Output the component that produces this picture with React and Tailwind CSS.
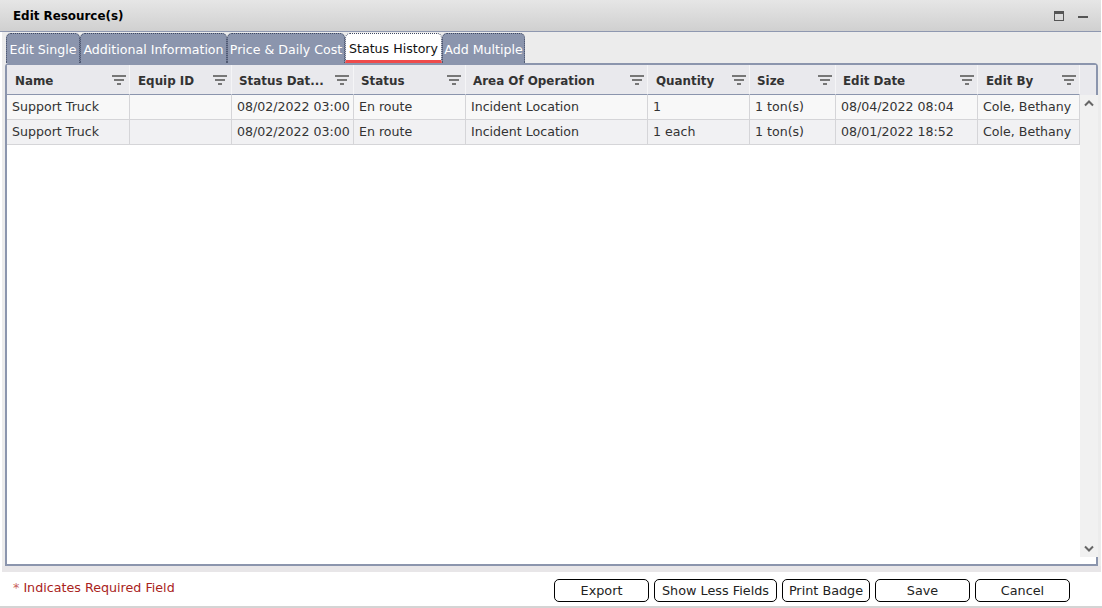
import React from "react";

const font = { fontFamily: '"DejaVu Sans", Verdana, sans-serif' };

const columns = [
  { label: "Name", width: "w-[123px]", pad: "pl-[8px] pr-[3px]" },
  { label: "Equip ID", width: "w-[102px]", pad: "pl-[8px] pr-[4px]" },
  { label: "Status Dat...", width: "w-[122px]", pad: "pl-[7px] pr-[4px]" },
  { label: "Status", width: "w-[112px]", pad: "pl-[7px] pr-[4px]" },
  { label: "Area Of Operation", width: "w-[182px]", pad: "pl-[7px] pr-[3px]" },
  { label: "Quantity", width: "w-[102px]", pad: "pl-[8px] pr-[3px]" },
  { label: "Size", width: "w-[86px]", pad: "pl-[7px] pr-[3px]" },
  { label: "Edit Date", width: "w-[142px]", pad: "pl-[7px] pr-[3px]" },
  { label: "Edit By", width: "w-[102px]", pad: "pl-[8px] pr-[3px]" },
];

const rows = [
  ["Support Truck", "", "08/02/2022 03:00", "En route", "Incident Location", "1", "1 ton(s)", "08/04/2022 08:04", "Cole, Bethany"],
  ["Support Truck", "", "08/02/2022 03:00", "En route", "Incident Location", "1 each", "1 ton(s)", "08/01/2022 18:52", "Cole, Bethany"],
];

const tabs = [
  { label: "Edit Single", width: "w-[74px]" },
  { label: "Additional Information", width: "w-[147px]" },
  { label: "Price & Daily Cost", width: "w-[118px]" },
  { label: "Status History", width: "w-[97px]", active: true },
  { label: "Add Multiple", width: "w-[83px]" },
];

function FilterIcon() {
  return (
    <svg width="14" height="11" viewBox="0 0 14 11" className="shrink-0">
      <rect x="0" y="0" width="14" height="2" fill="#777" />
      <rect x="2" y="4" width="10" height="2" fill="#777" />
      <rect x="5" y="8" width="4" height="2" fill="#777" />
    </svg>
  );
}

function Btn({ children, width }) {
  return (
    <button className={`h-[23px] ${width} rounded-[5px] border border-black bg-white pt-[2px] text-[12.8px] leading-none text-[#222]`}>
      {children}
    </button>
  );
}

export default function App() {
  return (
    <div style={font} className="flex h-[608px] w-[1102px] flex-col overflow-hidden bg-white">
      <div className="mr-px flex h-[32px] shrink-0 items-center justify-between border-b border-[#8f98b0] bg-gradient-to-b from-[#e6e6e6] to-[#d0d0d0] pl-[13px] pr-[13px]">
        <span className="pt-[2px] text-[11.9px] font-bold text-black">Edit Resource(s)</span>
        <div className="flex items-center gap-[14px]">
          <div className="h-[10px] w-[10px] border border-[#555] border-t-[3px]" />
          <div className="mt-[3px] h-[2px] w-[10px] bg-[#555]" />
        </div>
      </div>

      <div className="ml-[2px] mr-px flex h-[540px] shrink-0 flex-col border-b-[6px] border-[#e8e6e8] bg-[#ececec] pl-[3px] pr-[3px]">
        <div className="flex h-[31px] shrink-0 items-end pl-px pt-px">
          {tabs.map((t) => (
            <div
              key={t.label}
              className={
                t.active
                  ? `flex h-[30px] ${t.width} items-center justify-center whitespace-nowrap rounded-t-[5px] border border-b-[3px] border-dotted border-[#3c4660] border-b-[#ef4b4b] bg-white pt-[5px] text-[12.6px] text-[#111] [border-bottom-style:solid]`
                  : `flex h-[30px] ${t.width} items-center justify-center whitespace-nowrap rounded-t-[5px] border border-b-0 border-dotted border-[#3c4660] bg-[#8b95ad] pt-[3px] text-[12.6px] text-white`
              }
            >
              {t.label}
            </div>
          ))}
        </div>

        <div className="flex min-h-0 flex-1 flex-col rounded-t-[4px] border-2 border-[#8b95ad] bg-white">
          <div className="flex h-[30px] shrink-0 bg-[#e9e9ed]">
            {columns.map((c) => (
              <div
                key={c.label}
                className={`flex ${c.width} shrink-0 items-center justify-between border-b border-r border-[#f5f5f7] border-b-[#8b95ad] pt-[2px] ${c.pad} text-[11.9px] font-bold text-[#333]`}
              >
                <span className="whitespace-nowrap pt-[3px]">{c.label}</span>
                <FilterIcon />
              </div>
            ))}
            <div className="flex-1" />
          </div>

          <div className="flex min-h-0 flex-1">
            <div className="w-[1073px] shrink-0">
              {rows.map((r, i) => (
                <div key={i} className={`flex h-[25px] border-b border-[#d5d5d8] ${i === 0 ? "bg-[#f8f8f8]" : "bg-[#f1f1f3]"}`}>
                  {r.map((v, j) => (
                    <div
                      key={j}
                      className={`flex ${columns[j].width} shrink-0 items-center overflow-hidden whitespace-nowrap border-r border-[#d5d5d8] pl-[5px] text-[12.6px] text-[#333]`}
                    >
                      {v}
                    </div>
                  ))}
                </div>
              ))}
            </div>
            <div className="mb-[7px] flex w-[18px] shrink-0 flex-col items-center justify-between bg-[#f1f1f1] pb-[5px] pt-[5px]">
              <svg width="10" height="7" viewBox="0 0 10 7">
                <path d="M1 5.5 L5 1.5 L9 5.5" fill="none" stroke="#666" strokeWidth="2" />
              </svg>
              <svg width="10" height="7" viewBox="0 0 10 7">
                <path d="M1 1.5 L5 5.5 L9 1.5" fill="none" stroke="#666" strokeWidth="2" />
              </svg>
            </div>
          </div>
        </div>
      </div>

      <div className="flex flex-1 items-start justify-between border-b-2 border-[#d4d4d4] pl-[13px] pr-[32px]">
        <span className="pt-[6px] text-[12.7px] text-[#a9231c]">
          <span className="text-[#c8605a]">*</span> Indicates Required Field
        </span>
        <div className="flex gap-[5px] pt-[7px]">
          <Btn width="w-[95px]">Export</Btn>
          <Btn width="w-[123px]">Show Less Fields</Btn>
          <Btn width="w-[88px]">Print Badge</Btn>
          <Btn width="w-[95px]">Save</Btn>
          <Btn width="w-[95px]">Cancel</Btn>
        </div>
      </div>
    </div>
  );
}
